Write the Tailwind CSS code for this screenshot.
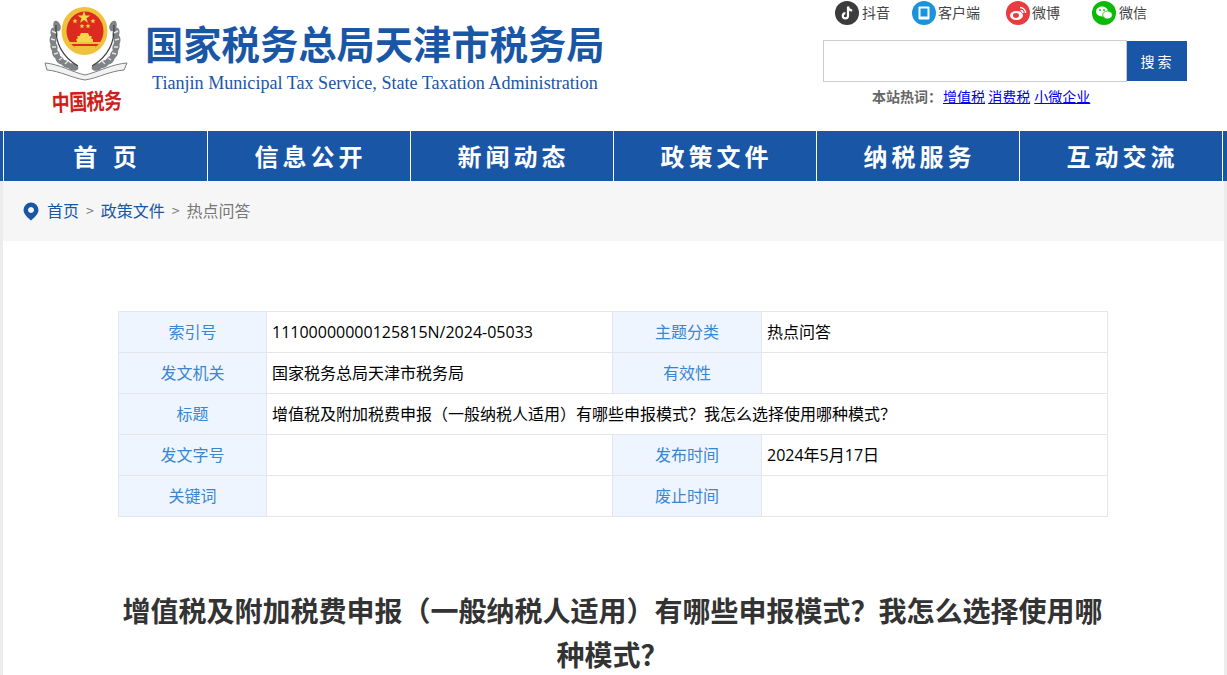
<!DOCTYPE html>
<html lang="zh-CN">
<head>
<meta charset="UTF-8">
<title>国家税务总局天津市税务局</title>
<script src="https://cdn.jsdelivr.net/npm/@tailwindcss/browser@4"></script>
</head>
<body class="bg-white font-['Noto_Sans_CJK_SC',sans-serif] overflow-hidden">
<div class="w-[1227px] h-[675px] overflow-hidden">

  <!-- header -->
  <header class="h-[131px] flex justify-between">
    <div class="flex">
      <div class="w-[146px] pl-[44px] pt-[6px] flex flex-col">
        <svg class="w-[84px] h-[78px]" viewBox="0 0 84 78">
          <g fill="#7f8385">
            <ellipse cx="13" cy="20" rx="3.500" ry="5.500" transform="rotate(-20 13 20)"/><ellipse cx="10" cy="27" rx="3.500" ry="5.500" transform="rotate(-10 10 27)"/>
            <ellipse cx="9" cy="34" rx="3.500" ry="5.500"/><ellipse cx="10" cy="41" rx="3.500" ry="5.500" transform="rotate(-15 10 41)"/>
            <ellipse cx="12" cy="48" rx="3.500" ry="5.500" transform="rotate(-30 12 48)"/><ellipse cx="16" cy="54" rx="3.500" ry="5.500" transform="rotate(-45 16 54)"/>
            <ellipse cx="22" cy="58" rx="3.500" ry="5.500" transform="rotate(-60 22 58)"/><ellipse cx="29" cy="61" rx="3.500" ry="5.500" transform="rotate(-75 29 61)"/>
            <ellipse cx="69" cy="20" rx="3.500" ry="5.500" transform="rotate(20 69 20)"/><ellipse cx="72" cy="27" rx="3.500" ry="5.500" transform="rotate(10 72 27)"/>
            <ellipse cx="73" cy="34" rx="3.500" ry="5.500"/><ellipse cx="72" cy="41" rx="3.500" ry="5.500" transform="rotate(15 72 41)"/>
            <ellipse cx="70" cy="48" rx="3.500" ry="5.500" transform="rotate(30 70 48)"/><ellipse cx="66" cy="54" rx="3.500" ry="5.500" transform="rotate(45 66 54)"/>
            <ellipse cx="60" cy="58" rx="3.500" ry="5.500" transform="rotate(60 60 58)"/><ellipse cx="53" cy="61" rx="3.500" ry="5.500" transform="rotate(75 53 61)"/>
          </g>
          <path d="M12 19 C11 36 17 50 34 60 M70 19 C71 36 65 50 48 60" fill="none" stroke="#3f4244" stroke-width="1.200"/>
          <path d="M8 25 l4 2 M7 33 l4 1 M8 41 l4 0 M10 48 l4 -1 M15 54 l3 -2 M21 58 l3 -3 M74 25 l-4 2 M75 33 l-4 1 M74 41 l-4 0 M72 48 l-4 -1 M67 54 l-3 -2 M61 58 l-3 -3" stroke="#e2e4e5" stroke-width="1.400"/>
          <ellipse cx="40.500" cy="25" rx="23" ry="24" fill="#eec23a"/>
          <ellipse cx="41" cy="25" rx="18.500" ry="19.500" fill="#dc2a1e"/>
          <path d="M40 5 l1.600 4.400 h4.700 l-3.800 2.800 1.400 4.500 -3.900 -2.700 -3.900 2.700 1.400 -4.500 -3.800 -2.800 h4.700 Z" fill="#f7d64a"/>
          <path d="M31 12.600 l.7 1.700 h1.800 l-1.400 1.100 .5 1.800 -1.600 -1 -1.600 1 .5 -1.800 -1.400 -1.100 h1.800 Z M38 17.600 l.7 1.700 h1.800 l-1.400 1.100 .5 1.800 -1.600 -1 -1.600 1 .5 -1.800 -1.400 -1.100 h1.800 Z M44 17.600 l.7 1.700 h1.800 l-1.400 1.100 .5 1.800 -1.600 -1 -1.600 1 .5 -1.800 -1.400 -1.100 h1.800 Z M49 12.600 l.7 1.700 h1.800 l-1.400 1.100 .5 1.800 -1.600 -1 -1.600 1 .5 -1.800 -1.400 -1.100 h1.800 Z" fill="#f7d64a"/>
          <path d="M33 36 h16 v-3 h-1.500 v-3 h-2 l-1.500 -3 h-7 l-1.500 3 h-2 v3 h-1.500 Z" fill="#f7d64a"/>
          <path d="M26 36 h30 v2 h-30 Z M30 40 h22 l-4 6 h-14 Z" fill="#eec23a"/>
          <path d="M1 57 C15 58 28 66 41 69 C54 66 68 58 83 57 L80 64 C66 65 54 72 41 74 C28 72 16 65 3 64 Z" fill="#f2f2f2" stroke="#7d8082" stroke-width="1"/>
        </svg>
        <span class="ml-[7px] mt-[1px] w-[70px] text-[18px] leading-[24px] font-bold text-[#cf1f1c] tracking-[-0.5px] whitespace-nowrap scale-y-125 origin-top -rotate-2">中国税务</span>
      </div>
      <div class="pt-[19px]">
        <h1 class="-ml-[1px] text-[38.300px] leading-[48px] font-bold text-[#1a56a6] whitespace-nowrap">国家税务总局天津市税务局</h1>
        <p class="mt-[4px] ml-[6px] text-[18.100px] leading-[24px] text-[#1a56a6] whitespace-nowrap font-['Liberation_Serif',serif]">Tianjin Municipal Tax Service, State Taxation Administration</p>
      </div>
    </div>
    <div class="w-[404px]">
      <div class="h-[40px] flex items-start text-[14px] leading-[24px] text-[#444] pt-[1px]">
        <div class="w-[89px] pl-[12px] flex items-center gap-[3px]">
          <svg class="w-[24px] h-[24px]" viewBox="0 0 24 24"><circle cx="12" cy="12" r="12" fill="#3c3c3c"/><path d="M13 5.500 v9.200 a2.600 2.600 0 1 1 -2.600 -2.600 M13 5.500 c0.300 2.400 1.800 3.800 4.200 4" fill="none" stroke="#fff" stroke-width="2.200"/></svg>
          <span class="-mt-[2px]">抖音</span>
        </div>
        <div class="w-[94px] flex items-center gap-[2px]">
          <svg class="w-[24px] h-[24px]" viewBox="0 0 24 24"><circle cx="12" cy="12" r="12" fill="#1893dc"/><rect x="6.500" y="5.500" width="11" height="13" rx="1" fill="#fff"/><rect x="8.500" y="7.500" width="7" height="8" fill="#1893dc"/></svg>
          <span class="-mt-[2px]">客户端</span>
        </div>
        <div class="w-[86px] flex items-center gap-[2px]">
          <svg class="w-[24px] h-[24px]" viewBox="0 0 24 24"><circle cx="12" cy="12" r="12" fill="#ea3c3f"/><ellipse cx="10.500" cy="14.500" rx="6.500" ry="4.500" fill="#fff"/><ellipse cx="10" cy="14.500" rx="3" ry="2.400" fill="#ea3c3f"/><path d="M14 6.500 a5.500 5.500 0 0 1 5.500 5.500 M14.500 9.500 a2.500 2.500 0 0 1 2.500 2.500" fill="none" stroke="#fff" stroke-width="1.400"/></svg>
          <span class="-mt-[2px]">微博</span>
        </div>
        <div class="flex items-center gap-[3px]">
          <svg class="w-[24px] h-[24px]" viewBox="0 0 24 24"><circle cx="12" cy="12" r="12" fill="#09bb07"/><ellipse cx="10" cy="10.500" rx="6" ry="5" fill="#fff"/><ellipse cx="15.500" cy="14" rx="4.800" ry="4" fill="#fff" stroke="#09bb07" stroke-width="0.800"/><circle cx="8" cy="9" r="0.900" fill="#09bb07"/><circle cx="12" cy="9" r="0.900" fill="#09bb07"/></svg>
          <span class="-mt-[2px]">微信</span>
        </div>
      </div>
      <div class="flex h-[42px]">
        <input type="text" class="w-[304px] h-[42px] border border-[#ccc] bg-white outline-none">
        <button class="w-[60px] h-[40px] mt-[1px] bg-[#1a56a6] text-white text-[14px] tracking-[3px] pl-[1px]">搜索</button>
      </div>
      <p class="mt-[4px] ml-[49px] text-[14px] leading-[20px] whitespace-nowrap text-[#666]">
        <b>本站热词：</b><a class="ml-[1px] underline text-[#00e]" href="#">增值税</a> <a class="underline text-[#00e]" href="#">消费税</a> <a class="ml-[1px] underline text-[#00e]" href="#">小微企业</a>
      </p>
    </div>
  </header>

  <!-- nav -->
  <nav class="h-[50px] bg-[#1a56a6] pl-[3px] flex text-white font-bold text-[24px] leading-[48px] tracking-[4px]">
    <div class="w-[204px] h-full border-l border-white pl-[3px] pb-[1px] flex items-center justify-center whitespace-pre [word-spacing:2px]">首 页</div>
    <div class="w-[203px] h-full border-l border-white pl-[3px] pb-[1px] flex items-center justify-center">信息公开</div>
    <div class="w-[203px] h-full border-l border-white pl-[3px] pb-[1px] flex items-center justify-center">新闻动态</div>
    <div class="w-[203px] h-full border-l border-white pl-[3px] pb-[1px] flex items-center justify-center">政策文件</div>
    <div class="w-[203px] h-full border-l border-white pl-[3px] pb-[1px] flex items-center justify-center">纳税服务</div>
    <div class="w-[204px] h-full border-x border-white pl-[3px] pb-[1px] flex items-center justify-center">互动交流</div>
  </nav>

  <!-- page -->
  <div class="bg-[#ececec] px-[3px] h-[494px]">
    <div class="bg-white h-full">
      <div class="h-[60px] bg-[#f6f6f6] flex items-center pl-[20px] pb-[2px] text-[16px] text-[#1a56a6] whitespace-nowrap">
        <svg class="w-[16px] h-[19px] mr-[8px] mt-[2px]" viewBox="0 0 16 19"><path fill-rule="evenodd" d="M8 0.500 a7.500 7.500 0 0 1 7.500 7.500 c0 4 -4.500 8 -7.500 10.500 c-3 -2.500 -7.500 -6.500 -7.500 -10.500 a7.500 7.500 0 0 1 7.500 -7.500 Z M8 5 a3 3 0 1 0 0.010 0 Z" fill="#1a56a6"/></svg>
        <span>首页</span><span class="mx-[7px] text-[#777] text-[14px]">&gt;</span><span>政策文件</span><span class="mx-[7px] text-[#777] text-[14px]">&gt;</span><span class="text-[#777]">热点问答</span>
      </div>

      <div class="pt-[70px] pl-[115px]">
        <table class="w-[989px] table-fixed border-collapse text-[16px] text-black font-['Open_Sans','Noto_Sans_CJK_SC',sans-serif]">
          <colgroup><col class="w-[148px]"><col class="w-[346px]"><col class="w-[149px]"><col class="w-[346px]"></colgroup>
          <tbody>
            <tr class="h-[41px]"><td class="border border-[#e3e6ea] bg-[#eef5fe] pb-[1px] text-center text-[#3b86d0]">索引号</td><td class="border border-[#e3e6ea] pb-[1px] px-[5px]">11100000000125815N/2024-05033</td><td class="border border-[#e3e6ea] bg-[#eef5fe] pb-[1px] text-center text-[#3b86d0]">主题分类</td><td class="border border-[#e3e6ea] pb-[1px] px-[5px]">热点问答</td></tr>
            <tr class="h-[41px]"><td class="border border-[#e3e6ea] bg-[#eef5fe] pb-[1px] text-center text-[#3b86d0]">发文机关</td><td class="border border-[#e3e6ea] pb-[1px] px-[5px]">国家税务总局天津市税务局</td><td class="border border-[#e3e6ea] bg-[#eef5fe] pb-[1px] text-center text-[#3b86d0]">有效性</td><td class="border border-[#e3e6ea] px-[5px]"></td></tr>
            <tr class="h-[41px]"><td class="border border-[#e3e6ea] bg-[#eef5fe] pb-[1px] text-center text-[#3b86d0]">标题</td><td colspan="3" class="border border-[#e3e6ea] pb-[1px] px-[5px]">增值税及附加税费申报（一般纳税人适用）有哪些申报模式？我怎么选择使用哪种模式？</td></tr>
            <tr class="h-[41px]"><td class="border border-[#e3e6ea] bg-[#eef5fe] pb-[1px] text-center text-[#3b86d0]">发文字号</td><td class="border border-[#e3e6ea] px-[5px]"></td><td class="border border-[#e3e6ea] bg-[#eef5fe] pb-[1px] text-center text-[#3b86d0]">发布时间</td><td class="border border-[#e3e6ea] pb-[1px] px-[5px]">2024年5月17日</td></tr>
            <tr class="h-[41px]"><td class="border border-[#e3e6ea] bg-[#eef5fe] pb-[1px] text-center text-[#3b86d0]">关键词</td><td class="border border-[#e3e6ea] px-[5px]"></td><td class="border border-[#e3e6ea] bg-[#eef5fe] pb-[1px] text-center text-[#3b86d0]">废止时间</td><td class="border border-[#e3e6ea] px-[5px]"></td></tr>
          </tbody>
        </table>
      </div>

      <h2 class="mt-[71px] mx-auto w-[990px] -translate-x-[1px] text-center text-[28px] leading-[44px] font-bold text-[#333]">增值税及附加税费申报（一般纳税人适用）有哪些申报模式？我怎么选择使用哪种模式？</h2>
    </div>
  </div>
</div>
</body>
</html>
